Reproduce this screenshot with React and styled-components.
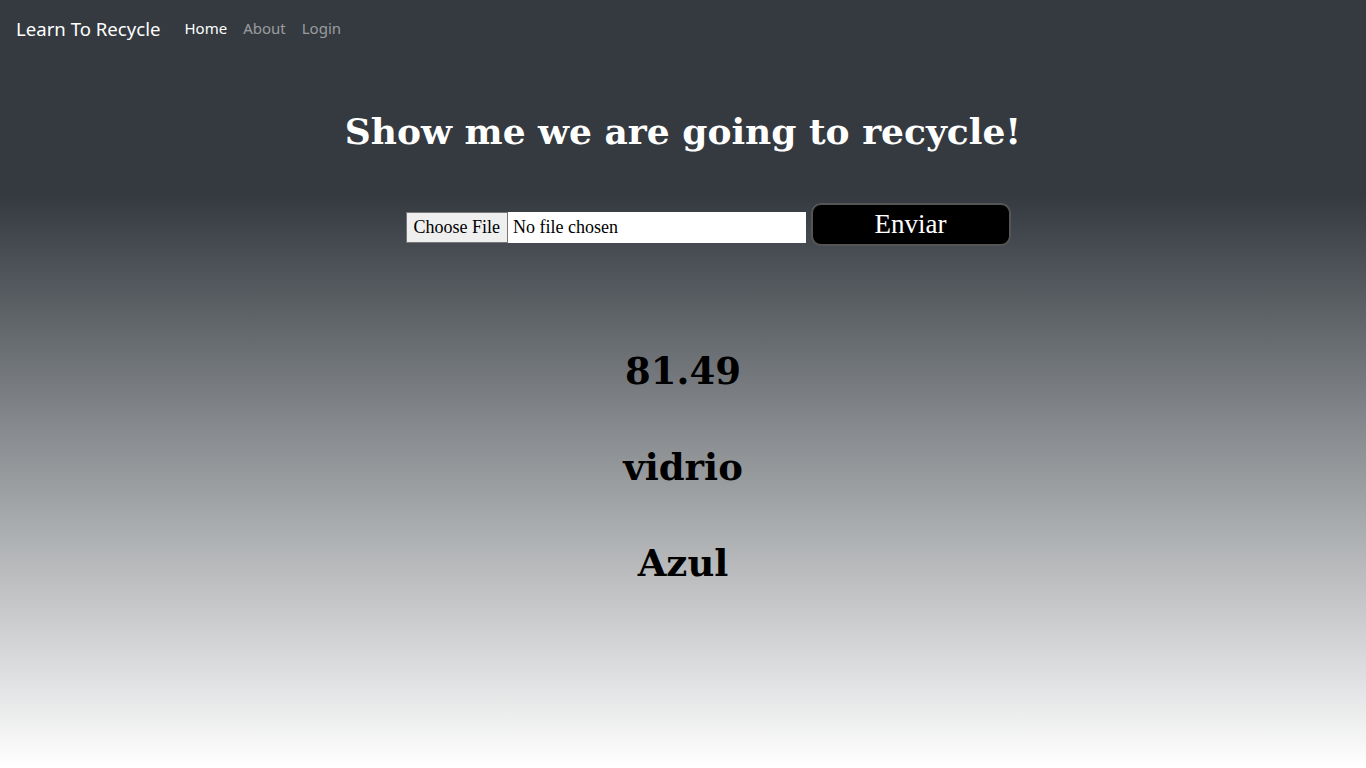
import React from "react";
import styled, { createGlobalStyle } from "styled-components";

const GlobalStyle = createGlobalStyle`
  html, body {
    margin: 0;
    padding: 0;
  }
  body {
    font-family: "Liberation Serif", serif;
  }
`;

const Page = styled.div`
  min-height: 100vh;
  background: linear-gradient(180deg, #343a40 0%, #343a40 25.5%, #ffffff 100%);
  display: flex;
  flex-direction: column;
`;

const Navbar = styled.nav`
  display: flex;
  align-items: center;
  height: 56px;
  padding: 0 16px;
  box-sizing: border-box;
  font-family: "Noto Sans", "Open Sans", sans-serif;
`;

const Brand = styled.a`
  color: #fff;
  font-size: 18.6px;
  margin-right: 16px;
  text-decoration: none;
`;

const NavLink = styled.a`
  color: ${({ $active }) => ($active ? "#fff" : "rgba(255,255,255,0.5)")};
  font-size: 15px;
  padding: 8px;
  text-decoration: none;
`;

const Main = styled.main`
  display: flex;
  flex-direction: column;
  align-items: center;
`;

const Title = styled.h1`
  font-family: "DejaVu Serif", Georgia, serif;
  font-weight: bold;
  font-size: 36px;
  color: #fff;
  margin: 51px 0 0;
  line-height: 48px;
`;

const UploadForm = styled.form`
  display: flex;
  align-items: flex-start;
  gap: 5px;
  margin: 48px 0 0 50px;
`;

const FileInput = styled.input`
  width: 400px;
  height: 31px;
  margin-top: 9px;
  background: #fff;
  font-family: "Liberation Serif", serif;
  font-size: 18px;
  color: #000;
  box-sizing: border-box;

  &::file-selector-button {
    font-family: "Liberation Serif", serif;
    font-size: 18px;
    height: 31px;
    margin: 0 5px 0 0;
    padding: 0 7px;
    background: #efefef;
    border: 1px solid #767676;
    border-radius: 0;
  }
`;

const SendButton = styled.button`
  width: 200px;
  height: 43px;
  box-sizing: border-box;
  background: #000;
  color: #fff;
  border: 2px solid #555;
  border-radius: 10px;
  font-family: "Liberation Serif", serif;
  font-size: 27px;
  line-height: 1;
  padding: 0 0 1px;
  cursor: pointer;
`;

const Results = styled.div`
  display: flex;
  flex-direction: column;
  align-items: center;
  gap: 48px;
  margin-top: 101px;
`;

const Result = styled.h2`
  font-family: "DejaVu Serif", Georgia, serif;
  font-weight: bold;
  font-size: 37px;
  line-height: 48px;
  color: #000;
  margin: 0;
`;

export default function App() {
  return (
    <>
      <GlobalStyle />
      <Page>
        <Navbar>
          <Brand href="#">Learn To Recycle</Brand>
          <NavLink href="#" $active>Home</NavLink>
          <NavLink href="#">About</NavLink>
          <NavLink href="#">Login</NavLink>
        </Navbar>
        <Main>
          <Title>Show me we are going to recycle!</Title>
          <UploadForm onSubmit={(e) => e.preventDefault()}>
            <FileInput type="file" />
            <SendButton type="submit">Enviar</SendButton>
          </UploadForm>
          <Results>
            <Result>81.49</Result>
            <Result>vidrio</Result>
            <Result>Azul</Result>
          </Results>
        </Main>
      </Page>
    </>
  );
}
